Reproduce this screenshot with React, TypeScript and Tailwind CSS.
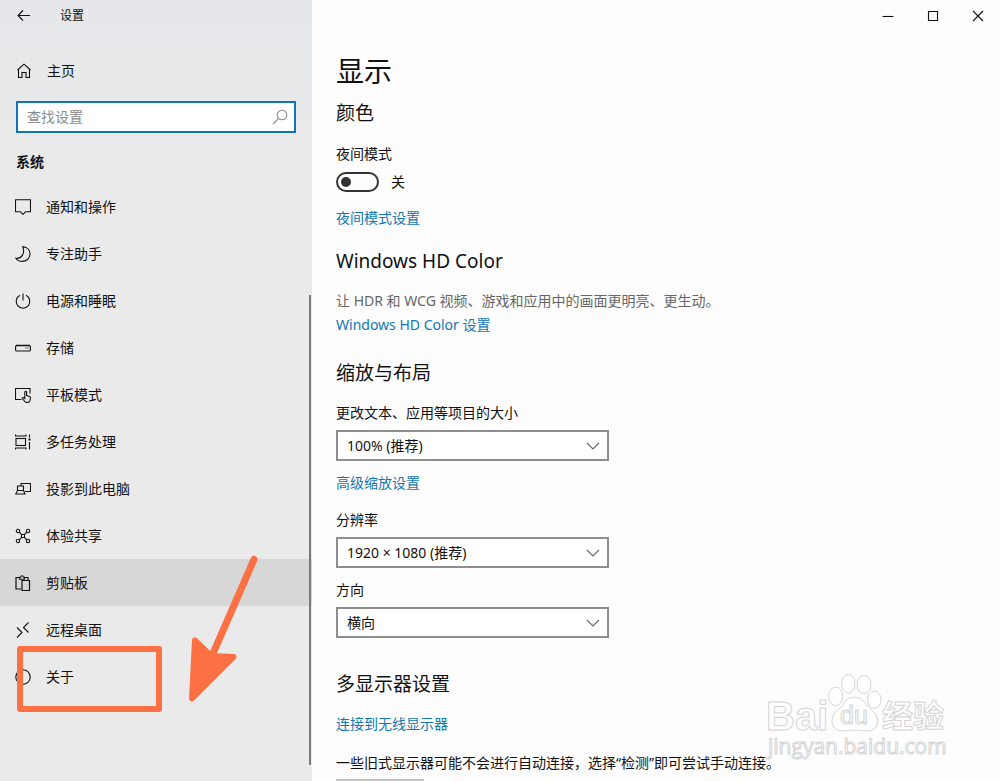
import type { ReactNode } from "react";

function Icon({ children, className = "" }: { children: ReactNode; className?: string }) {
  return (
    <svg
      viewBox="0 0 16 16"
      className={`size-4 shrink-0 ${className}`}
      fill="none"
      stroke="currentColor"
      strokeWidth="1.1"
      aria-hidden="true"
    >
      {children}
    </svg>
  );
}

const navItems: { label: string; icon: ReactNode; active?: boolean }[] = [
  { label: "通知和操作", icon: <path d="M.5.8h15v12h-5L8 15.3l-2.500-2.500h-5z" /> },
  {
    label: "专注助手",
    icon: <path d="M7.8.6c5 .6 7.4 4 7.2 7.6-.3 4.6-3.8 7.2-7.6 7.2C4.400 15.400 2 14.200.9 12.200c5.400.700 9.500-4.500 6.900-11.600z" />,
  },
  {
    label: "电源和睡眠",
    icon: <path d="M8 .5v7M5 2.300a6.800 6.800 0 1 0 6 0" />,
  },
  {
    label: "存储",
    icon: (
      <>
        <rect x=".6" y="5.500" width="14.800" height="5.500" rx="1" />
        <path d="M1 5.500h14" strokeWidth="1.500" />
        <path d="M10.500 8h1M12.500 8h1" />
      </>
    ),
  },
  {
    label: "平板模式",
    icon: (
      <>
        <path d="M6.500 12.500h-6V1.500h14.500v5" />
        <path d="M9.800 11.500V5.300c0-1.300 1.800-1.300 1.800 0v3.200l3 .9c.8.300 1 .7.900 1.500l-.5 2.600c-.2 1.200-.8 1.900-2 1.900h-1.500c-.9 0-1.500-.4-2-1.100l-2.300-3.300c.7-.8 1.700-.5 2.600.5z" />
      </>
    ),
  },
  {
    label: "多任务处理",
    icon: (
      <>
        <rect x="1" y="4.500" width="9.500" height="7" />
        <path d="M.5.500v1.500h10.500V.500M.5 15.500V14h10.500v1.500M14.500.500v3M14.500 8v7.500" />
        <path d="M13.500 5.500h2" strokeWidth="2" />
      </>
    ),
  },
  {
    label: "投影到此电脑",
    icon: (
      <>
        <path d="M6 5V2.500h9.500v8H10" />
        <path d="M2.500 9.500v-4.500h6v4.500M2.500 9.500h6l1.500 3.500H.700z" />
      </>
    ),
  },
  {
    label: "体验共享",
    icon: (
      <>
        <circle cx="3" cy="3" r="1.700" />
        <circle cx="13" cy="3" r="1.700" />
        <circle cx="3" cy="13" r="1.700" />
        <circle cx="13" cy="13" r="1.700" />
        <path d="m4.200 4.200 2.300 2.300h3l2.300-2.300M4.200 11.800l2.300-2.300h3l2.300 2.300M6.500 6.500v3M9.500 6.500v3" />
      </>
    ),
  },
  {
    label: "剪贴板",
    active: true,
    icon: (
      <>
        <path d="M6 14H1V2.500H4.500M10 2.500h3V5" strokeWidth="1.200" />
        <path d="M4.500 4.200V2.200h1.200c0-2 2.600-2 2.600 0H9.500v2z" />
        <path d="M7 5.500h7.500v10H7z" strokeWidth="1.200" />
      </>
    ),
  },
  { label: "远程桌面", icon: <path d="m2 5.500 5 5-5 5M13.500.500l-5 5 5 5" /> },
  {
    label: "关于",
    icon: <circle cx="8" cy="8" r="7.200" />,
  },
];

function Sidebar() {
  return (
    <aside className="relative w-[312px] shrink-0 bg-[#eaeaea] bg-linear-to-b from-[#e5e7ea] to-[#eaeaea] to-20%">
      <header className="flex h-8 items-center gap-7 pl-4 text-xs">
        <button type="button" aria-label="返回">
          <Icon>
            <path d="M14 7.500H2.200M7 2.500l-5 5 5 5" />
          </Icon>
        </button>
        <span>设置</span>
      </header>

      <a href="#home" className="mt-[23px] flex h-8 items-center gap-[15px] pl-4">
        <Icon>
          <path d="M1.500 7 8 1.200 14.500 7M2.500 6.200v8.300H6v-5h4v5h3.500V6.200" />
        </Icon>
        主页
      </a>

      <label className="mx-4 mt-[14px] flex h-8 items-center border-2 border-[#1274b8] bg-white pr-1.5 pl-[9px]">
        <input
          type="text"
          aria-label="查找设置"
          placeholder="查找设置"
          className="min-w-0 flex-1 bg-transparent outline-none placeholder:text-[#8c8c8c]"
        />
        <Icon className="size-3.5 text-[#8a8a8a]">
          <circle cx="10" cy="6" r="4.800" />
          <path d="M6.500 9.500 1 15" />
        </Icon>
      </label>

      <h2 className="mt-[19px] pl-4 leading-5 font-bold">系统</h2>

      <nav className="mt-[11px]">
        <ul>
          {navItems.map((item) => (
            <li key={item.label}>
              <a
                href={`#${item.label}`}
                aria-current={item.active ? "page" : undefined}
                className={`flex h-[47px] items-center gap-[15px] pl-[15px] ${item.active ? "bg-[#d7d7d7]" : ""}`}
              >
                <Icon>{item.icon}</Icon>
                {item.label}
              </a>
            </li>
          ))}
        </ul>
      </nav>

      <div className="absolute top-[295px] right-px h-[470px] w-0.5 bg-[#7a7a7a]" />
      <div className="absolute top-[646px] left-[17px] h-[66px] w-[145px] rounded-[3px] border-6 border-[#fc7044]" />
      <svg
        viewBox="0 0 80 150"
        className="absolute top-[554px] left-[187px] h-[150px] w-20"
        fill="#fc7044"
        stroke="#fc7044"
        aria-hidden="true"
      >
        <path d="M67 5.500 24 104" strokeWidth="7" strokeLinecap="round" />
        <path d="M8 86.500 24 102 46.500 103 5 144.500z" strokeWidth="6" strokeLinejoin="round" />
      </svg>
    </aside>
  );
}

function WindowControls() {
  return (
    <div className="flex h-8 justify-end">
      <button type="button" aria-label="最小化" className="grid w-[45px] place-items-center">
        <Icon>
          <path d="M2.500 8.500h11" />
        </Icon>
      </button>
      <button type="button" aria-label="最大化" className="grid w-[45px] place-items-center">
        <Icon>
          <path d="M3.500 3.500h9v9h-9z" />
        </Icon>
      </button>
      <button type="button" aria-label="关闭" className="grid w-[45px] place-items-center">
        <Icon>
          <path d="m3 3 10 10M13 3 3 13" />
        </Icon>
      </button>
    </div>
  );
}

function SelectField({ id, label, value }: { id: string; label: string; value: string }) {
  return (
    <div>
      <label htmlFor={id} className="block">
        {label}
      </label>
      <div className="relative mt-[7px] w-[273px]">
        <select
          id={id}
          className="h-[31px] w-full appearance-none border-2 border-[#8e8e8e] bg-white pl-[9px]"
        >
          <option>{value}</option>
        </select>
        <Icon className="pointer-events-none absolute top-2 right-2 text-[#666]">
          <path d="m2 5 6 6 6-6" />
        </Icon>
      </div>
    </div>
  );
}

function SettingsLink({ children }: { children: ReactNode }) {
  return (
    <a href="#settings" className="block w-fit text-[#1377b5]">
      {children}
    </a>
  );
}

function SectionTitle({ children }: { children: ReactNode }) {
  return <h2 className="text-[19px] leading-7">{children}</h2>;
}

function Watermark() {
  return (
    <svg
      viewBox="0 0 200 96"
      className="pointer-events-none absolute right-10 bottom-[15px] h-24 w-[200px]"
      fill="#fff"
      stroke="#d4d4d4"
      strokeWidth="1"
      fontFamily="'Open Sans', 'Noto Sans CJK SC', sans-serif"
    >
      <ellipse cx="88.300" cy="13.700" rx="6.800" ry="9.300" />
      <ellipse cx="104" cy="14.700" rx="7" ry="9" />
      <ellipse cx="75.700" cy="26.300" rx="7" ry="9.300" />
      <ellipse cx="114.300" cy="29.700" rx="6.800" ry="8.700" />
      <path d="M94.300 27.300c-6 0-9 3-11 7.500-2.500 4.500-11.300 7-11.300 16 0 7 5 10.200 10.500 10.200 4 0 7-1 12-1s9 1 13 1c6 0 10.200-4 10.200-10 0-9-9-12-12-17-2.400-4-5.400-6.700-11.400-6.700z" />
      <text x="6" y="60" fontSize="40" fontWeight="700" fontFamily="'Liberation Sans', sans-serif">
        Bai
      </text>
      <text x="80" y="54" fontSize="25" fontWeight="400" fontFamily="'Liberation Sans', sans-serif">
        du
      </text>
      <text x="122" y="57" fontSize="31" fontWeight="700">
        经验
      </text>
      <text x="8" y="84" fontSize="21" fontWeight="400">
        jingyan.baidu.com
      </text>
    </svg>
  );
}

export default function App() {
  return (
    <div className="relative flex h-screen overflow-hidden bg-[#fdfdfd] font-['Noto_Sans','Noto_Sans_CJK_SC',sans-serif] text-sm text-[#111]">
      <Sidebar />
      <main className="min-w-0 flex-1 leading-5">
        <WindowControls />
        <div className="px-6 pt-[19px]">
          <h1 className="text-[28px] leading-10">显示</h1>

          <section className="mt-2">
            <SectionTitle>颜色</SectionTitle>
            <label htmlFor="night" className="mt-[17px] block w-fit">
              夜间模式
            </label>
            <div className="mt-2 flex items-center gap-3">
              <input
                id="night"
                type="checkbox"
                role="switch"
                className="flex h-5 w-[43px] appearance-none items-center rounded-full border-2 border-[#333] pl-[3px] before:size-2.5 before:rounded-full before:bg-[#333] before:content-['']"
              />
              <span>关</span>
            </div>
            <div className="mt-4">
              <SettingsLink>夜间模式设置</SettingsLink>
            </div>
          </section>

          <section className="mt-[19px]">
            <SectionTitle>Windows HD Color</SectionTitle>
            <p className="mt-4 text-[#666]">让 HDR 和 WCG 视频、游戏和应用中的画面更明亮、更生动。</p>
            <div className="mt-1">
              <SettingsLink>Windows HD Color 设置</SettingsLink>
            </div>
          </section>

          <section className="mt-6">
            <SectionTitle>缩放与布局</SectionTitle>
            <div className="mt-4">
              <SelectField id="scale" label="更改文本、应用等项目的大小" value="100% (推荐)" />
            </div>
            <div className="mt-3 mb-[17px]">
              <SettingsLink>高级缩放设置</SettingsLink>
            </div>
            <div className="flex flex-col gap-3">
              <SelectField id="resolution" label="分辨率" value="1920 × 1080 (推荐)" />
              <SelectField id="orientation" label="方向" value="横向" />
            </div>
          </section>

          <section className="mt-8">
            <SectionTitle>多显示器设置</SectionTitle>
            <div className="mt-4">
              <SettingsLink>连接到无线显示器</SettingsLink>
            </div>
            <p className="mt-[19px]">一些旧式显示器可能不会进行自动连接，选择“检测”即可尝试手动连接。</p>
            <button type="button" aria-label="检测" className="mt-1.5 block h-8 w-[88px] bg-[#c4c4c4]" />
          </section>
        </div>
      </main>
      <Watermark />
    </div>
  );
}
